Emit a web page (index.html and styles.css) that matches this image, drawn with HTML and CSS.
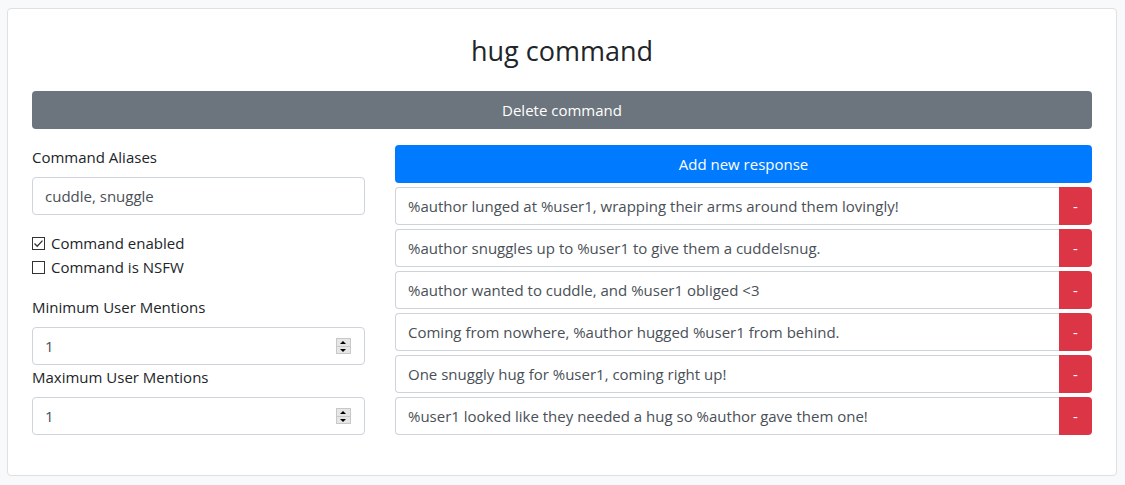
FILE: index.html
```html
<!DOCTYPE html>
<html lang="en">
<head>
<meta charset="utf-8">
<title>hug command</title>
<link rel="stylesheet" href="styles.css">
</head>
<body>
<div class="card">
  <h3 class="title">hug command</h3>
  <button class="btn btn-secondary btn-block">Delete command</button>
  <div class="row">
    <div class="col-left">
      <div class="form-group">
        <label class="label">Command Aliases</label>
        <div class="input">cuddle, snuggle</div>
      </div>
      <div class="form-group">
        <div class="check"><span class="box"><svg viewBox="0 0 13 13" width="13" height="13"><path d="M2.5 6.5 L5.2 9.2 L10.5 3.6" fill="none" stroke="#333" stroke-width="1.3"/></svg></span>Command enabled</div>
        <div class="check"><span class="box"></span>Command is NSFW</div>
      </div>
      <label class="label">Minimum User Mentions</label>
      <div class="input num">1<span class="spin"><span class="up"></span><span class="down"></span></span></div>
      <label class="label">Maximum User Mentions</label>
      <div class="input num">1<span class="spin"><span class="up"></span><span class="down"></span></span></div>
    </div>
    <div class="col-right">
      <button class="btn btn-primary btn-block">Add new response</button>
      <div class="resp"><div class="resp-text">%author lunged at %user1, wrapping their arms around them lovingly!</div><button class="btn-del">-</button></div>
      <div class="resp"><div class="resp-text">%author snuggles up to %user1 to give them a cuddelsnug.</div><button class="btn-del">-</button></div>
      <div class="resp"><div class="resp-text">%author wanted to cuddle, and %user1 obliged &lt;3</div><button class="btn-del">-</button></div>
      <div class="resp"><div class="resp-text">Coming from nowhere, %author hugged %user1 from behind.</div><button class="btn-del">-</button></div>
      <div class="resp"><div class="resp-text">One snuggly hug for %user1, coming right up!</div><button class="btn-del">-</button></div>
      <div class="resp"><div class="resp-text">%user1 looked like they needed a hug so %author gave them one!</div><button class="btn-del">-</button></div>
    </div>
  </div>
</div>
</body>
</html>
```
FILE: styles.css
```css
* { box-sizing: border-box; }
html, body { margin: 0; }
body {
  background: #f8f9fa;
  padding: 8px 8px 0 7px;
  font-family: "Open Sans", "Noto Sans", sans-serif;
  font-size: 15px;
  line-height: 24px;
  color: #212529;
}
.card {
  background: #fff;
  border: 1px solid #dfe0e1;
  border-radius: 4px;
  height: 468px;
  padding: 25px 24px 24px;
}
.title {
  margin: 0 0 23px;
  font-size: 27px;
  font-weight: 400;
  line-height: 34px;
  text-align: center;
}
.btn {
  display: block;
  width: 100%;
  height: 38px;
  border: 0;
  border-radius: 4px;
  color: #fff;
  font-family: inherit;
  font-size: 15px;
  line-height: 24px;
  padding: 7px 12px;
  text-align: center;
}
.btn-secondary { background: #6c757d; }
.btn-primary { background: #007bff; }
.row {
  display: grid;
  grid-template-columns: 333px 697px;
  column-gap: 30px;
  margin-top: 16px;
}
.form-group { margin-bottom: 16px; }
.label { display: block; margin-bottom: 8px; }
.input {
  position: relative;
  height: 38px;
  border: 1px solid #ced4da;
  border-radius: 4px;
  padding: 6px 12px;
  color: #495057;
}
.check { display: flex; align-items: center; height: 24px; }
.box {
  width: 13px;
  height: 13px;
  border: 1px solid #333;
  background: #fff;
  margin-right: 6px;
  position: relative;
  display: inline-block;
}
.box svg { position: absolute; left: -1px; top: -1px; }
.spin {
  position: absolute;
  right: 13px;
  top: 10px;
  width: 15px;
  height: 16px;
  display: flex;
  flex-direction: column;
  border: 1px solid #c8c8c8;
  background: #e6e6e6;
}
.spin span { flex: 1; position: relative; }
.spin .up { border-bottom: 1px solid #c8c8c8; }
.spin .up::after, .spin .down::after {
  content: "";
  position: absolute;
  left: 3px;
  border-left: 3.5px solid transparent;
  border-right: 3.5px solid transparent;
}
.spin .up::after { top: 2px; border-bottom: 3px solid #000; }
.spin .down::after { top: 2px; border-top: 3px solid #000; }
.resp {
  display: flex;
  height: 38px;
  margin-top: 4px;
}
.resp-text {
  flex: 1;
  border: 1px solid #ced4da;
  border-right: 0;
  border-radius: 4px 0 0 4px;
  padding: 6px 12px;
  color: #495057;
  white-space: nowrap;
}
.btn-del {
  width: 33px;
  border: 0;
  background: #dc3545;
  color: #fff;
  border-radius: 0 4px 4px 0;
  font-family: inherit;
  font-size: 15px;
  padding: 0;
}
```
